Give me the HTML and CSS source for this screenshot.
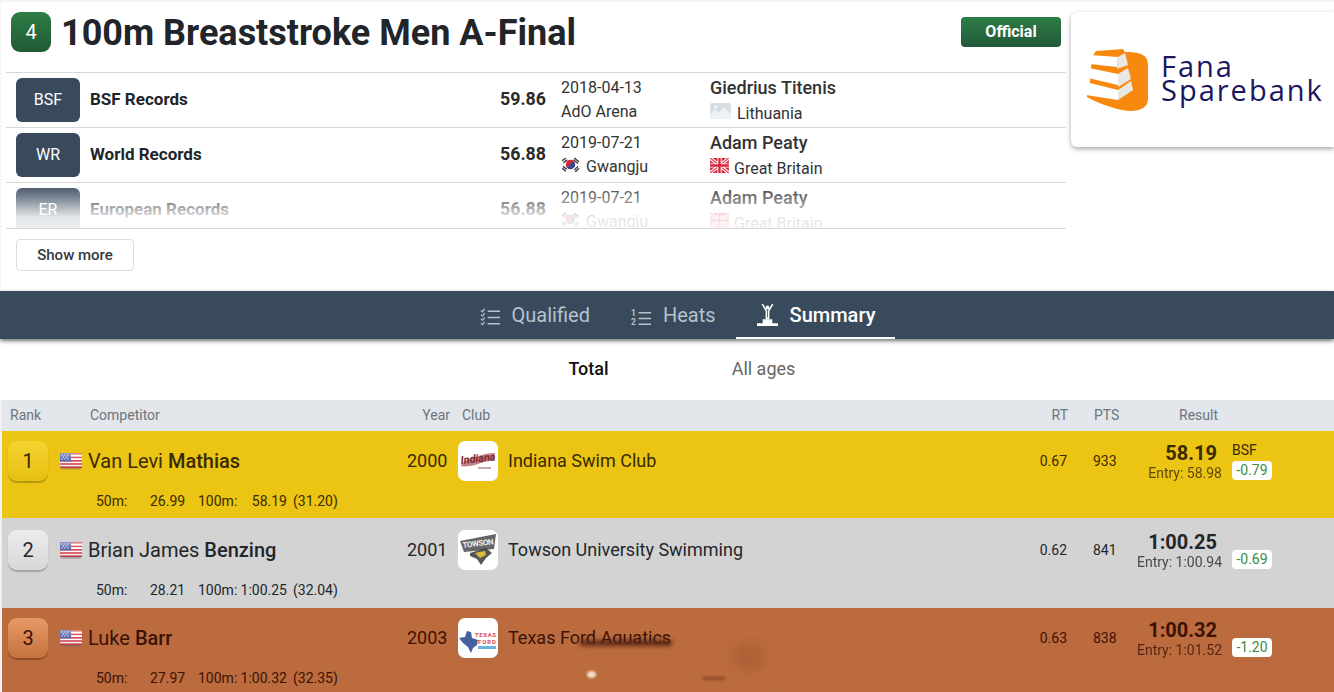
FILE: index.html
```html
<!DOCTYPE html>
<html lang="en">
<head>
<meta charset="utf-8">
<title>100m Breaststroke Men A-Final</title>
<link rel="stylesheet" href="styles.css">
</head>
<body>
<svg class="defs" aria-hidden="true">
  <defs>
    <linearGradient id="gloss" x1="0" y1="0" x2="0" y2="1"><stop offset="0" stop-color="#fff" stop-opacity=".35"/><stop offset=".5" stop-color="#fff" stop-opacity="0"/><stop offset="1" stop-color="#000" stop-opacity=".12"/></linearGradient>
    <filter id="soft" x="-20%" y="-20%" width="140%" height="140%"><feGaussianBlur stdDeviation=".8"/></filter>
  </defs>
  <symbol id="us" viewBox="0 0 22 18">
    <rect x="1" y="14" width="20" height="3.500" fill="#6d5f70" opacity=".55" filter="url(#soft)"/>
    <rect y="1" width="22" height="15" fill="#fff" rx="1.500"/>
    <g fill="#d8404a"><rect y="1" width="22" height="1.600"/><rect y="4.600" width="22" height="1.600"/><rect y="8" width="22" height="1.600"/><rect y="11.200" width="22" height="1.600"/><rect y="14.400" width="22" height="1.600"/></g>
    <rect y="1" width="11" height="8.400" fill="#5a67ab"/>
    <g fill="#dfe3f3"><circle cx="2" cy="3" r=".7"/><circle cx="5" cy="3" r=".7"/><circle cx="8" cy="3" r=".7"/><circle cx="3.500" cy="5" r=".7"/><circle cx="6.500" cy="5" r=".7"/><circle cx="2" cy="7" r=".7"/><circle cx="5" cy="7" r=".7"/><circle cx="8" cy="7" r=".7"/></g>
    <rect y="1" width="22" height="15" rx="1.500" fill="url(#gloss)"/>
  </symbol>
  <symbol id="kr" viewBox="0 0 20 16">
    <g stroke="#3a3a3a" stroke-width="1.500"><path d="M1 4 5 1M2.500 6 6.500 3M14 1 19 5M13 3 18 7M2 10 6 13M1 12 5 15M14 14 18 10M15 16 19 12"/></g>
    <circle cx="10" cy="8" r="5" fill="#d2283c"/>
    <path d="M5 8a5 5 0 0 0 10 0 2.500 2.500 0 0 0-5 0 2.500 2.500 0 0 1-5 0z" fill="#2a4e96"/>
  </symbol>
  <symbol id="gb" viewBox="0 0 20 16">
    <rect width="20" height="16" fill="#d5263c"/>
    <path d="M0 0 20 16M20 0 0 16" stroke="#fff" stroke-width="3.500"/>
    <path d="M0 0 20 16M20 0 0 16" stroke="#d5263c" stroke-width="1.200"/>
    <path d="M10 0V16M0 8H20" stroke="#fff" stroke-width="4.500"/>
    <path d="M10 0V16M0 8H20" stroke="#d5263c" stroke-width="2.500"/>
  </symbol>
  <symbol id="placeholder" viewBox="0 0 21 16">
    <rect width="21" height="16" rx="2" fill="#d6dee4"/>
    <path d="M0 12 5 6l4 4 4-6 8 6v6H0z" fill="#eef1f4"/>
    <circle cx="6" cy="4" r="1.600" fill="#f2f4f6"/>
  </symbol>
</svg>

<section class="top">
  <div class="main">
    <header class="head">
      <span class="event-no">4</span>
      <h1 class="title">100m Breaststroke Men A-Final</h1>
      <span class="status">Official</span>
    </header>
    <div class="records">
      <div class="rec">
        <span class="rec-code">BSF</span>
        <span class="rec-name">BSF Records</span>
        <span class="rec-time">59.86</span>
        <div class="rec-where"><div>2018-04-13</div><div>AdO Arena</div></div>
        <div class="rec-who"><div class="rec-athlete">Giedrius Titenis</div><div class="rec-nation"><svg class="flag-lt"><use href="#placeholder"/></svg>Lithuania</div></div>
      </div>
      <div class="rec">
        <span class="rec-code">WR</span>
        <span class="rec-name">World Records</span>
        <span class="rec-time">56.88</span>
        <div class="rec-where"><div>2019-07-21</div><div class="rec-place"><svg class="flag-kr"><use href="#kr"/></svg>Gwangju</div></div>
        <div class="rec-who"><div class="rec-athlete">Adam Peaty</div><div class="rec-nation"><svg class="flag-gb"><use href="#gb"/></svg>Great Britain</div></div>
      </div>
      <div class="rec rec-fade">
        <span class="rec-code">ER</span>
        <span class="rec-name">European Records</span>
        <span class="rec-time">56.88</span>
        <div class="rec-where"><div>2019-07-21</div><div class="rec-place"><svg class="flag-kr"><use href="#kr"/></svg>Gwangju</div></div>
        <div class="rec-who"><div class="rec-athlete">Adam Peaty</div><div class="rec-nation"><svg class="flag-gb"><use href="#gb"/></svg>Great Britain</div></div>
      </div>
    </div>
    <button class="more">Show more</button>
  </div>
  <aside class="sponsor">
    <svg class="sponsor-mark" viewBox="0 0 62 62" aria-hidden="true">
      <path d="M9 2 36 0l2 3C52 3 61 5 61 16v34c0 8-7 12-17 12C34 62 14 56 0 48v-6l3-10 1-14 2-12z" fill="#f78a0e"/>
      <path d="M3 6 31 8 30 18 3 15z" fill="#fff"/>
      <path d="M31 8 38 4 41 16 30 20z" fill="#e9e7e3"/>
      <path d="M2 19 31 25 31 36 1 29z" fill="#fff"/>
      <path d="M31 25 41 19 44 30 31 38z" fill="#e9e7e3"/>
      <path d="M-1 33 31 41 31 51 -1 46z" fill="#fff"/>
      <path d="M31 41 44 32 46 41 31 51z" fill="#e9e7e3"/>
    </svg>
    <div class="sponsor-name">Fana<br>Sparebank</div>
  </aside>
</section>

<nav class="tabs">
  <a class="tab">
    <svg class="tab-icon" viewBox="0 0 22 20" aria-hidden="true"><g fill="none" stroke="currentColor"><path d="M1 2.500 2.500 4 5 1M1 7 2.500 8.500 5 5.500M1 11.500 2.500 13 5 10M1 16 2.500 17.500 5 14.500" stroke-width="1.300"/><path d="M8 3.500H21M8 10H21M8 16.500H21" stroke-width="1.500"/></g></svg>
    Qualified
  </a>
  <a class="tab">
    <svg class="tab-icon" viewBox="0 0 22 20" aria-hidden="true"><text x="0" y="8" class="tab-digit">1</text><text x="0" y="18" class="tab-digit">2</text><path d="M8 5H21M8 11H21M8 17H21" stroke="currentColor" stroke-width="1.500" fill="none"/></svg>
    Heats
  </a>
  <a class="tab tab-on">
    <svg class="tab-icon tab-icon-big" viewBox="0 0 22 24" aria-hidden="true"><circle cx="11" cy="3.500" r="2" fill="currentColor"/><path d="M5.500 0 9.800 7v8h2.400V7L16.500 0" stroke="currentColor" stroke-width="1.600" fill="none"/><path d="M6 16h10v4h6v3H0v-3h6z" fill="currentColor"/></svg>
    Summary
  </a>
</nav>

<div class="subtabs">
  <span class="sub sub-on">Total</span>
  <span class="sub">All ages</span>
</div>

<section class="table">
  <div class="thead">
    <span class="h-rank">Rank</span>
    <span class="h-comp">Competitor</span>
    <span class="h-year">Year</span>
    <span class="h-club">Club</span>
    <span class="h-rt">RT</span>
    <span class="h-pts">PTS</span>
    <span class="h-res">Result</span>
  </div>

  <article class="row gold">
    <div class="line">
      <span class="rank">1</span>
      <svg class="flag"><use href="#us"/></svg>
      <span class="name">Van Levi <b>Mathias</b></span>
      <span class="year">2000</span>
      <span class="club-logo">
        <svg viewBox="0 0 40 40" aria-hidden="true"><path d="M3 24C9 17 14 17 20 15c6-2 12-3 17-3l-1 7c-9 1-13 3-19 5-6 1-9 2-14 1z" fill="#a8484e" opacity=".7"/><text x="3" y="23" class="logo-in" textLength="35" transform="rotate(-6 3 23)">Indiana</text><path d="M20 27h13" stroke="#c9aaaa" stroke-width="2"/></svg>
      </span>
      <span class="club">Indiana Swim Club</span>
      <span class="rt">0.67</span>
      <span class="pts">933</span>
      <div class="res"><div class="time">58.19</div><div class="entry">Entry: 58.98</div></div>
      <div class="diff"><div class="tag">BSF</div><div class="pill">-0.79</div></div>
    </div>
    <div class="splits"><span class="s-l1">50m:</span><span class="s-v1">26.99</span><span class="s-l2">100m:</span><span class="s-v2">58.19</span><span class="s-d">(31.20)</span></div>
  </article>

  <article class="row silver">
    <div class="line">
      <span class="rank">2</span>
      <svg class="flag"><use href="#us"/></svg>
      <span class="name">Brian James <b>Benzing</b></span>
      <span class="year">2001</span>
      <span class="club-logo">
        <svg viewBox="0 0 40 40" aria-hidden="true"><path d="M2 11 38 4 36 19 6 22z" fill="#666"/><text x="5" y="18" class="logo-to" textLength="31" transform="rotate(-7 5 18)">TOWSON</text><path d="M12 23 28 18l6 5-6 5-5 7-4-6-7-3z" fill="#3a3a3a" opacity=".85"/><path d="M17 23 27 21l1 4-6 3z" fill="#d9bc3c"/></svg>
      </span>
      <span class="club">Towson University Swimming</span>
      <span class="rt">0.62</span>
      <span class="pts">841</span>
      <div class="res"><div class="time">1:00.25</div><div class="entry">Entry: 1:00.94</div></div>
      <div class="diff"><div class="tag"></div><div class="pill">-0.69</div></div>
    </div>
    <div class="splits"><span class="s-l1">50m:</span><span class="s-v1">28.21</span><span class="s-l2">100m:</span><span class="s-v2">1:00.25</span><span class="s-d">(32.04)</span></div>
  </article>

  <article class="row bronze">
    <div class="line">
      <span class="rank">3</span>
      <svg class="flag"><use href="#us"/></svg>
      <span class="name">Luke <b>Barr</b></span>
      <span class="year">2003</span>
      <span class="club-logo">
        <svg viewBox="0 0 40 40" aria-hidden="true"><path d="M1 20 7 19 9 13 13 14 14 20 20 22 19 27 15 30 13 35 10 29 5 25z" fill="#44609f"/><text x="17" y="19" class="logo-tx" textLength="21">TEXAS</text><text x="20" y="25.500" class="logo-tx" textLength="18">FORD</text><path d="M20 28H38V31H20z" fill="#6ab0e0"/></svg>
      </span>
      <span class="club">Texas Ford Aquatics</span>
      <span class="rt">0.63</span>
      <span class="pts">838</span>
      <div class="res"><div class="time">1:00.32</div><div class="entry">Entry: 1:01.52</div></div>
      <div class="diff"><div class="tag"></div><div class="pill">-1.20</div></div>
    </div>
    <div class="splits"><span class="s-l1">50m:</span><span class="s-v1">27.97</span><span class="s-l2">100m:</span><span class="s-v2">1:00.32</span><span class="s-d">(32.35)</span></div>
    <div class="smudge"><i class="sm-cover"></i><i class="sm-dark"></i><i class="sm-blot"></i><i class="sm-blot2"></i><i class="sm-spot"></i></div>
  </article>
</section>
</body>
</html>
```
FILE: styles.css
```css
* { box-sizing: border-box; }
html, body { margin: 0; height: 692px; overflow: hidden; background: #fff; }
body { font-family: Roboto, "Liberation Sans", sans-serif; color: #212529; }
.defs { position: absolute; width: 0; height: 0; }

/* top area */
.top { display: flex; height: 291px; border-top: 2px solid #f4f5f5; border-left: 1px solid #f4f5f5; background: #fff; }
.main { width: 1065px; padding-left: 5px; flex: none; }
.head { display: flex; align-items: flex-start; height: 70px; padding: 10px 5px 0 5px; }
.event-no { width: 40px; height: 40px; border-radius: 9px; display: flex; align-items: center; justify-content: center; color: #fff; font-size: 20px; background: linear-gradient(#2f7d46, #1f5a34); }
.title { margin: 0 0 0 10px; font-size: 36px; line-height: 42px; font-weight: 700; color: #212529; flex: 1; white-space: nowrap; }
.status { width: 100px; height: 30px; margin-top: 5px; border-radius: 4px; color: #fff; font-size: 16px; font-weight: 700; line-height: 29px; text-align: center; background: linear-gradient(#2e7d46, #22593a); }

.records { border-bottom: 1px solid #d8d8d8; height: 157px; }
.rec { position: relative; display: flex; height: 55px; padding: 5px 0 0 10px; border-top: 1px solid #d8d8d8; overflow: hidden; }
.rec-fade { height: 46px; }
.rec-fade::after { content: ""; position: absolute; left: 0; right: 0; top: 0; bottom: 0; background: linear-gradient(rgba(255,255,255,0) 0, rgba(255,255,255,.3) 30%, rgba(255,255,255,.85) 75%, rgba(255,255,255,.9) 100%); }
.rec-code { width: 64px; height: 44px; flex: none; border-radius: 6px; background: #394a5d; color: #fff; font-size: 16px; line-height: 43px; text-align: center; }
.rec-name { width: 336px; margin-left: 10px; font-size: 17px; font-weight: 700; line-height: 42px; color: #212529; }
.rec-time { width: 120px; text-align: right; font-size: 17.8px; font-weight: 700; line-height: 42px; color: #2a2a2a; }
.rec-where { width: 149px; margin-left: 15px; font-size: 16px; line-height: 24px; color: #333; margin-top: -2px; }
.rec-place { display: flex; align-items: center; }
.rec-who { flex: 1; margin-top: -2px; font-size: 16px; color: #333; }
.rec-athlete { font-size: 18px; font-weight: 500; line-height: 23px; }
.rec-nation { display: flex; align-items: center; line-height: 25px; margin-top: 2px; }
.flag-lt { width: 21px; height: 16px; margin: -6px 6px 0 0; flex: none; }
.flag-kr { width: 19px; height: 15px; margin: -6px 6px 0 0; flex: none; }
.flag-gb { width: 19px; height: 15px; margin: -6px 5px 0 0; flex: none; }
.more { display: block; margin: 10px 0 0 10px; width: 118px; height: 32px; padding: 0; border: 1px solid #dcdcdc; border-radius: 4px; background: #fff; font: 500 15px Roboto, sans-serif; color: #343a40; }

.sponsor { flex: 1; height: 135px; margin: 10px 0 0 5px; display: flex; align-items: center; padding-left: 16px; background: #fff; border-radius: 6px 0 0 6px; box-shadow: 0 2px 5px rgba(0,0,0,.35); }
.sponsor-mark { width: 62px; height: 62px; flex: none; overflow: visible; }
.sponsor-name { margin: -3px 0 0 12px; font-family: "Open Sans", sans-serif; font-weight: 500; font-size: 29px; letter-spacing: 2px; line-height: 24px; color: #1a1760; white-space: nowrap; }

/* tabs */
.tabs { position: relative; display: flex; justify-content: center; height: 48px; padding-left: 20px; background: #394a5d; box-shadow: 0 2px 4px rgba(0,0,0,.55); }
.tab { display: flex; align-items: center; gap: 11px; padding: 0 20px 0 21px; font-size: 20px; color: #b7c1cc; }
.tab-on { color: #fff; font-weight: 500; border-bottom: 2px solid #fff; padding-top: 2px; gap: 12px; }
.tab-icon { width: 21px; height: 21px; flex: none; margin-top: 4px; }
.tab-icon-big { width: 21px; height: 23px; margin-top: 0; }
.tab-digit { font: 700 9px Roboto, sans-serif; fill: currentColor; }

.subtabs { display: flex; justify-content: center; height: 61px; padding-left: 18px; }
.sub { width: 175px; text-align: center; font-size: 18px; line-height: 60px; color: #666; }
.sub-on { color: #111; font-weight: 500; }

/* table */
.table { border-left: 2px solid #f0f1f2; }
.thead { display: flex; height: 31px; background: #e3e6ea; font-size: 14px; line-height: 30px; color: #6c757d; }
.h-rank { width: 80px; padding-left: 8px; }
.h-comp { width: 300px; margin-left: 8px; }
.h-year { width: 60px; text-align: right; }
.h-club { width: 560px; margin-left: 12px; }
.h-rt { width: 46px; text-align: right; }
.h-pts { width: 40px; margin-left: 26px; }
.h-res { width: 60px; margin-left: 24px; text-align: right; }

.row { position: relative; }
.gold { background: #ebc414; color: #3a2a00; height: 87px; padding-top: 10px; }
.silver { background: #d3d3d3; color: #22262b; height: 90px; padding-top: 12px; }
.bronze { background: #bb6b3d; color: #3b1208; height: 84px; padding-top: 10px; }
.line { display: flex; align-items: center; height: 40px; }
.rank { width: 40px; height: 40px; flex: none; margin-left: 6px; border-radius: 9px; display: flex; align-items: center; justify-content: center; font-size: 20px; }
.gold .rank { background: linear-gradient(#f3d330, #e9c011); box-shadow: 0 2px 1px #b39610; }
.silver .rank { background: linear-gradient(#ececec, #d8d8d8); box-shadow: 0 2px 1px #a5a5a5; }
.bronze .rank { background: linear-gradient(#e79a66, #c5723f); box-shadow: 0 2px 1px #8e4f29; }
.flag { width: 22px; height: 18px; flex: none; margin-left: 12px; }
.name { width: 319px; margin-left: 6px; font-size: 20px; }
.name b { font-weight: 500; }
.year { width: 40px; margin-top: -2px; text-align: right; font-size: 18px; }
.club-logo { width: 40px; height: 40px; flex: none; margin-left: 11px; border-radius: 7px; background: #fff; overflow: hidden; }
.club-logo svg { display: block; width: 40px; height: 40px; }
.logo-in { font: italic 700 11px Roboto, sans-serif; fill: #7c2a33; }
.logo-to { font: 700 8px Roboto, sans-serif; fill: #eee; }
.logo-tx { font: 700 6px Roboto, sans-serif; fill: #d6485a; }
.club { width: 500px; margin: -2px 0 0 10px; font-size: 18px; }
.rt { width: 59px; text-align: right; font-size: 14px; }
.pts { width: 30px; margin-left: 26px; font-size: 14px; }
.res { width: 99px; height: 40px; text-align: right; }
.time { padding-right: 5px; font-size: 20px; line-height: 24px; font-weight: 700; }
.entry { font-size: 14px; line-height: 16px; opacity: .8; }
.diff { width: 40px; height: 40px; margin-left: 10px; }
.tag { height: 18px; margin-bottom: 2px; font-size: 14px; line-height: 18px; }
.pill { width: 40px; height: 19px; border-radius: 4px; background: #fff; color: #3d8b40; font-size: 14px; line-height: 18px; text-align: center; }
.splits { display: flex; margin: 10px 0 0 94px; font-size: 14px; line-height: 20px; }
.s-l1 { width: 54px; }
.s-v1 { width: 35px; text-align: right; }
.s-l2 { width: 40px; margin-left: 13px; }
.s-v2 { width: 49px; text-align: right; }
.s-d { margin-left: 6px; }

/* blurred patch over the third row */
.smudge { position: absolute; left: 566px; top: 26px; width: 210px; height: 55px; }
.smudge i { position: absolute; display: block; }
.sm-cover { left: 8px; top: 9px; width: 197px; height: 44px; background: #bb6b3d; filter: blur(2px); }
.sm-dark { left: 12px; top: 6px; width: 92px; height: 6px; border-radius: 3px; background: rgba(60,20,10,.7); filter: blur(2px); }
.sm-blot { left: 165px; top: 10px; width: 32px; height: 26px; border-radius: 50%; background: rgba(120,60,30,.2); filter: blur(5px); }
.sm-blot2 { left: 135px; top: 43px; width: 22px; height: 3px; background: rgba(90,40,20,.5); filter: blur(1.500px); }
.sm-spot { left: 19px; top: 37px; width: 9px; height: 7px; border-radius: 50%; background: #f3ddc9; filter: blur(1px); }
```
